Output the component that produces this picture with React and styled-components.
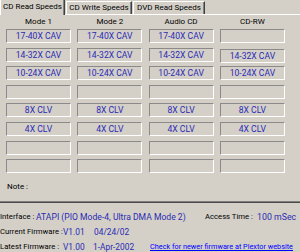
import React from "react";
import styled, { createGlobalStyle } from "styled-components";

const GlobalStyle = createGlobalStyle`
    html, body {
        margin: 0;
        padding: 0;
        background-color: #d4d0c8;
    }
    body {
        font-family: Roboto, "Liberation Sans", Arial, sans-serif;
        font-size: 7.7px;
        color: #000;
    }
`

const Panel = styled.div`
    width: 300px;
    height: 252px;
    overflow: hidden;
    background-color: #d4d0c8;
`

const TabStrip = styled.div`
    display: flex;
    align-items: flex-end;
    height: 15px;
    box-sizing: border-box;
    border-bottom: 1px solid #fff;
`

const Tab = styled.div`
    position: relative;
    box-sizing: border-box;
    height: ${props => props.$active ? '16px' : '13px'};
    margin-bottom: ${props => props.$active ? '-1px' : '0'};
    margin-left: ${props => props.$active ? '0' : '1px'};
    width: ${props => props.$width}px;
    padding-top: ${props => props.$active ? '1px' : '0'};
    font-size: 8px;
    line-height: 12px;
    text-align: center;
    white-space: nowrap;
    background-color: #d4d0c8;
    border-top: 1px solid #fff;
    border-left: 1px solid #fff;
    border-right: 1px solid #404040;
    box-shadow: inset -1px 0 0 #808080;
`

const Grid = styled.div`
    display: grid;
    grid-template-columns: repeat(4, 65px);
    column-gap: 6.3px;
    padding-left: 6px;
`

const Column = styled.div`
    display: flex;
    flex-direction: column;
`

const Head = styled.div`
    height: 14px;
    line-height: 14px;
    font-size: 8px;
    text-align: center;
`

const Boxes = styled.div`
    display: flex;
    flex-direction: column;
    gap: 4.6px;
`

const SpeedBox = styled.div`
    box-sizing: border-box;
    height: 14px;
    margin-top: ${props => props.$nudge ? '1px' : '0'};
    margin-bottom: ${props => props.$nudge ? '-1px' : '0'};
    line-height: 12px;
    font-size: 8.6px;
    text-align: center;
    color: #2a2ab4;
    border-top: 1px solid #8a8a8a;
    border-left: 1px solid #8a8a8a;
    border-bottom: 1px solid #fff;
    border-right: 1px solid #fff;
`

const Note = styled.div`
    height: 28px;
    line-height: 28px;
    padding-left: 7px;
    font-size: 8px;
`

const Divider = styled.div`
    height: 1px;
    background-color: #808080;
    border-bottom: 1px solid #4a4a4a;
`

const Info = styled.div`
    display: flex;
    flex-direction: column;
    padding-top: 6px;
`

const Line = styled.div`
    display: flex;
    align-items: center;
    height: 15px;
    white-space: nowrap;
`

const Label = styled.span`
    width: ${props => props.$width ? props.$width + 'px' : 'auto'};
    flex-shrink: 0;
`

const Value = styled.span`
    color: #2a2ab4;
    font-size: ${props => props.$size || 8.4}px;
    width: ${props => props.$width ? props.$width + 'px' : 'auto'};
    flex-shrink: 0;
`

const Link = styled.a`
    color: #0000ff;
    font-size: 7.3px;
    text-decoration: underline;
    cursor: pointer;
`

const columns = [
    { title: "Mode 1", rows: ["17-40X CAV", "14-32X CAV", "10-24X CAV", "", "8X CLV", "4X CLV", "", ""] },
    { title: "Mode 2", rows: ["17-40X CAV", "14-32X CAV", "10-24X CAV", "", "8X CLV", "4X CLV", "", ""] },
    { title: "Audio CD", rows: ["17-40X CAV", "14-32X CAV", "10-24X CAV", "", "8X CLV", "4X CLV", "", ""] },
    { title: "CD-RW", rows: ["", "14-32X CAV", "10-24X CAV", "", "8X CLV", "4X CLV", "", ""], nudge: 1 },
]

const App = () => {
    return (
        <Panel>
            <GlobalStyle />
            <TabStrip>
                <Tab $active $width={65}>CD Read Speeds</Tab>
                <Tab $width={66}>CD Write Speeds</Tab>
                <Tab $width={72}>DVD Read Speeds</Tab>
            </TabStrip>
            <Grid>
                {columns.map(col => (
                    <Column key={col.title}>
                        <Head>{col.title}</Head>
                        <Boxes>
                            {col.rows.map((r, i) => (
                                <SpeedBox key={i} $nudge={col.nudge === i}>{r}</SpeedBox>
                            ))}
                        </Boxes>
                    </Column>
                ))}
            </Grid>
            <Note>Note :</Note>
            <Divider />
            <Info>
                <Line>
                    <Label $width={36}>Interface : </Label>
                    <Value $width={169} $size={8.6}>ATAPI (PIO Mode-4, Ultra DMA Mode 2)</Value>
                    <Label $width={52}>Access Time : </Label>
                    <Value $size={8.8}>100 mSec</Value>
                </Line>
                <Line>
                    <Label $width={63}>Current Firmware :</Label>
                    <Value $width={31}>V1.01</Value>
                    <Value>04/24/02</Value>
                </Line>
                <Line>
                    <Label $width={63}>Latest Firmware :</Label>
                    <Value $width={30}>V1.00</Value>
                    <Value $width={57}>1-Apr-2002</Value>
                    <Link>Check for newer firmware at Plextor website</Link>
                </Line>
            </Info>
        </Panel>
    )
}

export default App;
